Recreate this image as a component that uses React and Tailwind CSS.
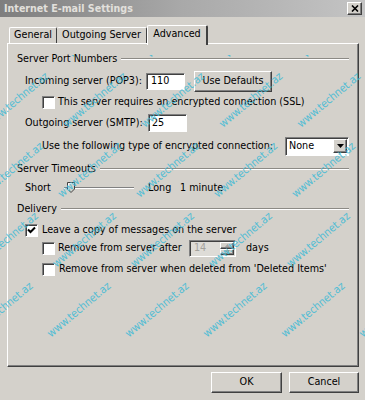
import React from 'react';

const sunken = 'border border-t-[#808080] border-l-[#808080] border-r-white border-b-white shadow-[inset_1px_1px_0_#404040]';
const raised = 'border border-t-white border-l-white border-r-[#404040] border-b-[#404040] shadow-[inset_-1px_-1px_0_#808080]';

function Check({ checked }) {
  return (
    <span className={`w-[13px] h-[13px] shrink-0 bg-white flex items-center justify-center ${sunken}`}>
      {checked && (
        <svg width="9" height="9" viewBox="0 0 9 9">
          <path d="M1 3.5 L3.5 6 L8 1.5" stroke="#000" strokeWidth="2" fill="none" />
        </svg>
      )}
    </span>
  );
}

function Group({ title, className = '' }) {
  return (
    <div className={`flex items-center h-[14px] px-[9px] ${className}`}>
      <span>{title}</span>
      <div className="flex-1 ml-[4px] border-t border-t-[#8c8a85] border-b border-b-white" />
    </div>
  );
}

function Watermark() {
  const stripes = [];
  for (let k = -5; k <= 4; k++) stripes.push(53 + 78 * k);
  return (
    <div className="absolute left-0 right-0 top-[55px] h-[285px] overflow-hidden pointer-events-none">
      {stripes.map((x) => (
        <div
          key={x}
          className="absolute whitespace-nowrap text-[11px] leading-[13px] text-[#46bcd6] opacity-90 origin-bottom-left rotate-[-40deg]"
          style={{ left: x, top: 272 }}
        >
          {[0, 1, 2, 3, 4, 5].map((i) => (
            <span key={i} className="mr-[30px]">www.technet.az</span>
          ))}
        </div>
      ))}
    </div>
  );
}

export default function App() {
  return (
    <div className="relative w-[365px] h-[400px] overflow-hidden bg-[#d4d1cb] text-[10.7px] text-black font-['DejaVu_Sans_Condensed','DejaVu_Sans',sans-serif] flex flex-col">
      {/* title bar */}
      <div className="h-[17px] shrink-0 bg-gradient-to-r from-[#7e7e7e] via-[#a9a9a9] to-[#c4c4c4] flex items-center justify-between pl-[4px] pr-[3px]">
        <span className="font-bold text-[10.6px] text-[#e2e0dc]">Internet E-mail Settings</span>
        <div className={`w-[15px] h-[13px] bg-[#d4d1cb] flex items-center justify-center ${raised}`}>
          <svg width="8" height="7" viewBox="0 0 8 7">
            <path d="M1 0.5 L7 6.5 M7 0.5 L1 6.5" stroke="#000" strokeWidth="1.6" />
          </svg>
        </div>
      </div>

      {/* tabs */}
      <div className="flex items-end h-[18px] mt-[8px] pl-[9px] shrink-0">
        <div className="w-[48px] h-[16px] flex items-center justify-center border-t border-l border-t-white border-l-white border-r border-r-[#404040] rounded-t-[2px]">General</div>
        <div className="w-[90px] h-[16px] flex items-center justify-center border-t border-t-white border-r border-r-[#404040] rounded-t-[2px]">Outgoing Server</div>
        <div className="relative z-10 w-[61px] h-[20px] -mb-[2px] pb-[3px] bg-[#d4d1cb] flex items-center justify-center border-t border-l border-t-white border-l-white border-r-2 border-r-[#404040] rounded-t-[2px]">Advanced</div>
      </div>

      {/* panel */}
      <div className={`ml-[7px] w-[352px] h-[324px] shrink-0 flex flex-col pt-[8px] ${raised}`}>
        <Group title="Server Port Numbers" />

        <div className="mt-[5px] h-[21px] flex items-center pl-[17px]">
          <span className="w-[121px] shrink-0">Incoming server (POP3):</span>
          <div className={`w-[39px] h-[17px] bg-white flex items-center pl-[4px] ${sunken}`}>110</div>
          <div className={`ml-[9px] w-[78px] h-[21px] flex items-center justify-center ${raised}`}>Use Defaults</div>
        </div>

        <div className="mt-[4px] h-[13px] flex items-center pl-[34px]">
          <Check />
          <span className="ml-[3px]">This server requires an encrypted connection (SSL)</span>
        </div>

        <div className="mt-[5px] h-[18px] flex items-center pl-[17px]">
          <span className="w-[123px] shrink-0">Outgoing server (SMTP):</span>
          <div className={`w-[39px] h-[18px] bg-white flex items-center pl-[3px] ${sunken}`}>25</div>
        </div>

        <div className="mt-[5px] h-[18px] flex items-center pl-[34px]">
          <span className="w-[243px] shrink-0">Use the following type of encrypted connection:</span>
          <div className={`w-[64px] h-[19px] bg-white flex items-center justify-between pl-[3px] pr-[1px] ${sunken}`}>
            <span>None</span>
            <div className={`w-[14px] h-[14px] bg-[#d4d1cb] flex items-center justify-center ${raised}`}>
              <svg width="7" height="4" viewBox="0 0 7 4"><path d="M0 0 H7 L3.5 4 Z" fill="#000" /></svg>
            </div>
          </div>
        </div>

        <Group title="Server Timeouts" className="mt-[7px]" />

        <div className="mt-[5px] h-[14px] flex items-center pl-[17px]">
          <span className="w-[39px] shrink-0">Short</span>
          <div className="relative w-[70px] h-[14px] flex items-center">
            <div className="w-full border-t border-t-[#808080] border-b border-b-white" />
            <svg className="absolute left-[3px] top-[1px]" width="8" height="11" viewBox="0 0 8 11">
              <path d="M0.5 0.5 H7.5 V7 L4 10.5 L0.5 7 Z" fill="#d4d1cb" stroke="#404040" strokeWidth="1" />
              <path d="M1.5 8 V1.5 H6.5" fill="none" stroke="#fff" strokeWidth="1" />
            </svg>
          </div>
          <span className="ml-[14px] w-[32px] shrink-0">Long</span>
          <span>1 minute</span>
        </div>

        <Group title="Delivery" className="mt-[7px]" />

        <div className="mt-[7px] h-[14px] flex items-center pl-[17px]">
          <Check checked />
          <span className="ml-[4px]">Leave a copy of messages on the server</span>
        </div>

        <div className="mt-[3px] h-[17px] flex items-center pl-[34px]">
          <Check />
          <span className="ml-[3px] w-[131px] shrink-0">Remove from server after</span>
          <div className={`w-[47px] h-[17px] bg-[#dedcd7] flex items-center justify-between pl-[4px] pr-[1px] ${sunken}`}>
            <span className="text-[#a4a29d]">14</span>
            <div className="flex flex-col w-[14px] h-[13px]">
              <div className={`flex-1 bg-[#d4d1cb] flex items-center justify-center ${raised}`}>
                <svg width="5" height="3" viewBox="0 0 5 3"><path d="M0 3 H5 L2.5 0 Z" fill="#a4a29d" /></svg>
              </div>
              <div className={`flex-1 bg-[#d4d1cb] flex items-center justify-center ${raised}`}>
                <svg width="5" height="3" viewBox="0 0 5 3"><path d="M0 0 H5 L2.5 3 Z" fill="#a4a29d" /></svg>
              </div>
            </div>
          </div>
          <span className="ml-[10px]">days</span>
        </div>

        <div className="mt-[5px] h-[14px] flex items-center pl-[34px]">
          <Check />
          <span className="ml-[4px]">Remove from server when deleted from 'Deleted Items'</span>
        </div>
      </div>

      {/* buttons */}
      <div className="mt-[5px] flex justify-end gap-[7px] pr-[6px]">
        <div className={`w-[71px] h-[21px] flex items-center justify-center ${raised}`}>OK</div>
        <div className={`w-[70px] h-[21px] flex items-center justify-center ${raised}`}>Cancel</div>
      </div>

      <Watermark />
    </div>
  );
}
